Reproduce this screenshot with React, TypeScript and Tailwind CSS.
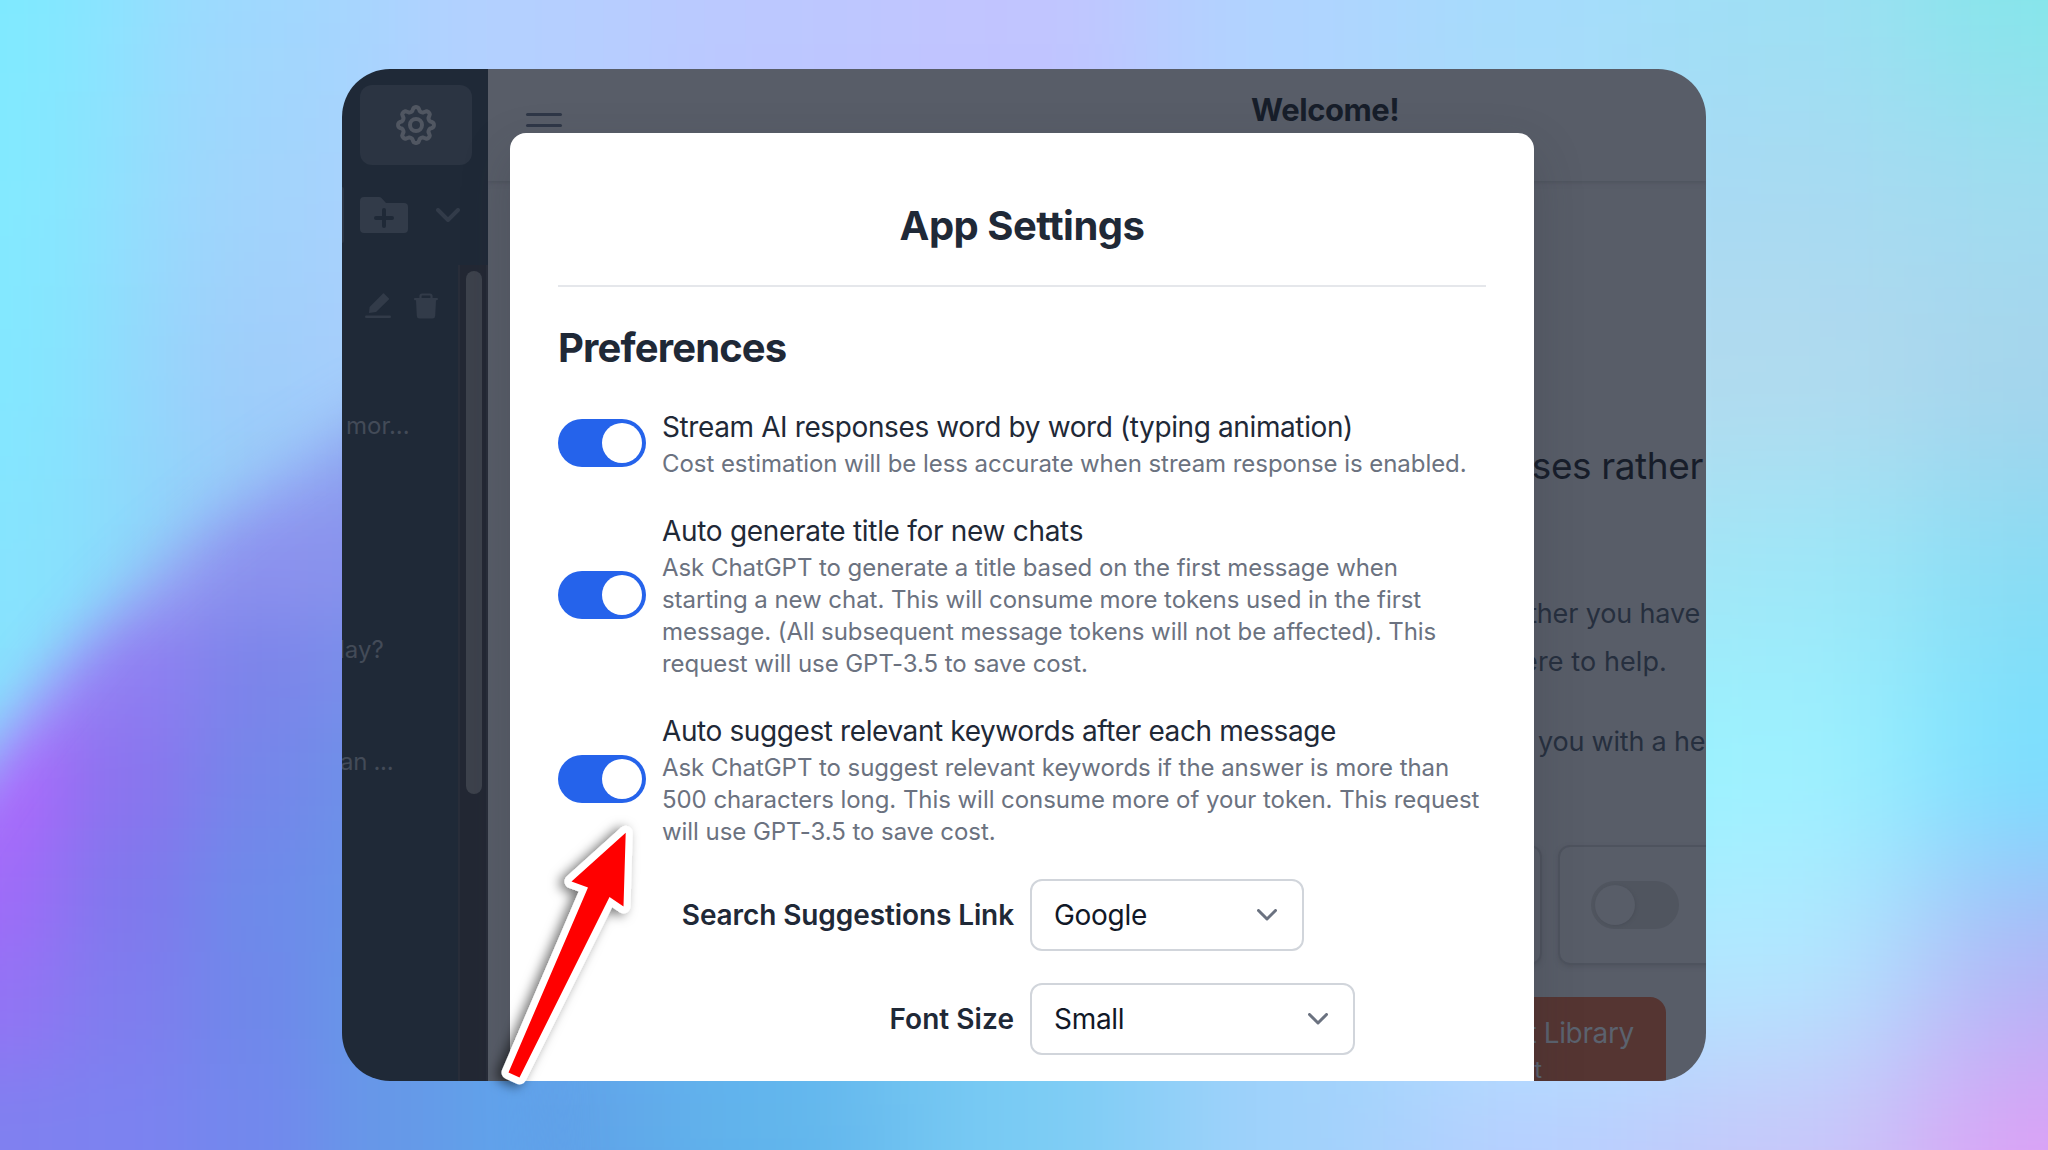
import type { ReactNode } from "react";

type MeshProps = { id: string; rows: string[][]; x: number; y: number; w: number; h: number; blur: number };

/** A smooth colour field: coarse cells centred on their nodes, softened by a blur. */
function Mesh({ id, rows, x, y, w, h, blur }: MeshProps) {
  const lastRow = rows.length - 1;
  return (
    <>
      <filter id={id} x="-1000" y="-1000" width="4200" height="3400" filterUnits="userSpaceOnUse" colorInterpolationFilters="sRGB">
        <feGaussianBlur stdDeviation={blur} />
      </filter>
      <g filter={`url(#${id})`} shapeRendering="crispEdges">
        {rows.map((row, r) =>
          row.map((fill, c) => {
            const left = c === 0 ? -400 : x + (c - 0.5) * w;
            const right = c === row.length - 1 ? x + (c + 0.5) * w + 400 : x + (c + 0.5) * w;
            const top = r === 0 ? -400 : y + (r - 0.5) * h;
            const bottom = r === lastRow ? y + (r + 0.5) * h + 400 : y + (r + 0.5) * h;
            return <rect key={`${r}-${c}`} x={left} y={top} width={right - left} height={bottom - top} fill={fill} />;
          }),
        )}
      </g>
    </>
  );
}

const SKY = [
  ["#7eeaff", "#a0d8fe", "#b4d0ff", "#bcc8ff", "#c2c4ff", "#b0d4ff", "#a6dcfc", "#9ee0f4", "#84e6ea"],
  ["#82eaff", "#a2d4fc", "#b4d0ff", "#bcc6ff", "#c0c2ff", "#b0d4ff", "#a8dcf8", "#a8daf2", "#a0dcf0"],
  ["#82e8ff", "#a0ccfa", "#b4d0ff", "#bcc6ff", "#c0c2ff", "#b0d4ff", "#b4dcf0", "#b2daee", "#a6d4ec"],
  ["#86e4fe", "#92ccf8", "#92ccf8", "#92ccf8", "#92ccf8", "#92ccf8", "#a8e0f4", "#9ee8f8", "#88dcf4"],
  ["#8ae0fc", "#92ccf8", "#62a4ea", "#64b8ee", "#7accf4", "#a0d2fb", "#90f6ff", "#9ef2ff", "#78e0ff"],
  ["#7c84f0", "#6e8cea", "#62a4ea", "#64b8ee", "#7accf4", "#a0d2fb", "#b0e8ff", "#b2e8ff", "#b0b6f6"],
  ["#7c84f0", "#6e8cea", "#609ee8", "#60b4ec", "#7accf4", "#a0d2fb", "#b8ceff", "#c8c6f9", "#dea0f6"],
];

const DUSK = [
  ["#a0a8fb", "#98a8f6", "#94a8f4", "#8ca0ee", "#8c9cee"],
  ["#a890fb", "#98a0f3", "#8c92ee", "#8892ec", "#8094ec"],
  ["#a87cfb", "#907ef2", "#7c84ea", "#7890ea", "#7098e8"],
  ["#ac68fc", "#8a74ee", "#7586ea", "#6c92e8", "#6698e8"],
  ["#9e6cf8", "#8078ed", "#6e8aea", "#6894e8", "#629ee8"],
  ["#9274f4", "#7f7dee", "#6f88ea", "#6698e8", "#60a2ea"],
  ["#8080f0", "#7c82f0", "#7288ed", "#6698e8", "#60a2ea"],
];

function Backdrop() {
  return (
    <svg className="absolute inset-0" width="2048" height="1150" viewBox="0 0 2048 1150">
      <Mesh id="sky" rows={SKY} x={0} y={0} w={256} h={192} blur={75} />
      <filter id="edge" x="-400" y="0" width="1600" height="1800" filterUnits="userSpaceOnUse">
        <feGaussianBlur stdDeviation="30" />
      </filter>
      <mask id="dusk-mask" maskUnits="userSpaceOnUse" x="0" y="0" width="2048" height="1150">
        <path d="M-200 1100 L-70 860 Q10 720 110 615 Q230 490 400 400 L500 500 L560 1400 L-200 1400Z" fill="#fff" filter="url(#edge)" />
      </mask>
      <g mask="url(#dusk-mask)">
        <Mesh id="dusk" rows={DUSK} x={0} y={448} w={128} h={112} blur={38} />
      </g>
    </svg>
  );
}

function GearIcon() {
  const points = Array.from({ length: 96 }, (_, i) => {
    const a = (i / 96) * Math.PI * 2 - Math.PI / 2;
    const r = 15.9 + 2.1 * Math.tanh(1.8 * Math.cos(8 * a));
    return `${(20 + r * Math.cos(a)).toFixed(2)} ${(20 + r * Math.sin(a)).toFixed(2)}`;
  });
  return (
    <svg width="40" height="40" viewBox="0 0 40 40" fill="none" stroke="#505661" strokeWidth="4" strokeLinejoin="round">
      <path d={`M${points.join("L")}Z`} />
      <circle cx="20" cy="20" r="6" />
    </svg>
  );
}

function FolderPlusIcon() {
  return (
    <svg width="48" height="36" viewBox="0 0 48 36">
      <path d="M4 0H19Q20.5 0 21.5 1L26 6H44Q48 6 48 10V32Q48 36 44 36H4Q0 36 0 32V4Q0 0 4 0Z" fill="#323b49" />
      <path d="M24 13V29M16 21H32" stroke="#1f2937" strokeWidth="4" strokeLinecap="round" />
    </svg>
  );
}

function EditIcon() {
  return (
    <svg width="26" height="26" viewBox="0 0 26 26" fill="#323b49">
      <path d="M19 0.5 24 5.5Q24.3 6 23.8 6.5L11 19 4 20 4.6 14 18 0.6Q18.500 0 19 .5Z" />
      <rect x="0" y="22.500" width="26" height="2.5" rx="1.2" />
    </svg>
  );
}

function TrashIcon() {
  return (
    <svg width="24" height="26" viewBox="0 0 24 26">
      <path d="M6.500 5.500V3Q6.500 1.500 8 1.500H16Q17.500 1.500 17.500 3V5.500" fill="none" stroke="#323b49" strokeWidth="2.200" />
      <path d="M1 5H23Q24 5 24 6T23 7.200H22L21.200 23Q21 25.500 18.500 25.500H5.500Q3 25.500 2.800 23L2 7.200H1Q0 7.200 0 6T1 5Z" fill="#323b49" />
    </svg>
  );
}

function Sidebar() {
  return (
    <aside className="relative flex w-[146px] shrink-0 flex-col bg-[#1f2937] pt-4">
      <span className="absolute top-[118px] left-0 h-[56px] w-[2px] rounded-r bg-[#2b3442]" />
      <div className="ml-[18px] flex h-20 w-28 items-center justify-center rounded-xl bg-[#2b3442]">
        <GearIcon />
      </div>
      <div className="flex h-[100px] items-center gap-7 pl-[18px]">
        <FolderPlusIcon />
        <svg width="24" height="14" viewBox="0 0 24 14" fill="none" stroke="#323b49" strokeWidth="4" strokeLinecap="round" strokeLinejoin="round">
          <path d="M2 2 12 12 22 2" />
        </svg>
      </div>
      <div className="flex flex-1">
        <div className="w-[116px] overflow-hidden text-[24px] whitespace-nowrap text-[#434b58]">
          <div className="flex h-[105px] items-center gap-[23px] pb-[24px] pl-[23px]">
            <EditIcon />
            <TrashIcon />
          </div>
          <div className="pl-[4px] leading-[112px]">mor...</div>
          <div className="h-28" />
          <div className="-ml-[3px] leading-[112px]">lay?</div>
          <div className="-ml-[2px] leading-[112px] tracking-[-0.3px]">an ...</div>
        </div>
        <div className="w-[30px] border-x-2 border-x-[#282d39] bg-[#232834] pt-[6px] pl-[6px]">
          <div className="h-[523px] w-4 rounded-full bg-[#3d424c]" />
        </div>
      </div>
    </aside>
  );
}

function Backpage() {
  return (
    <main className="flex min-w-0 flex-1 flex-col bg-[#585d68] whitespace-nowrap">
      <header className="flex h-28 shrink-0 items-start pl-[38px] shadow-[0_2px_4px_#4f545f]">
        <div className="mt-[44px] flex w-9 flex-col gap-[8px]">
          <span className="h-[3px] rounded-full bg-[#2f3747]" />
          <span className="h-[3px] rounded-full bg-[#2f3747]" />
        </div>
        <h2 className="mt-[20px] ml-[689px] text-[31px] leading-[41px] font-bold tracking-[-0.45px] text-[#171e2a]">Welcome!</h2>
      </header>
      <h3 className="mt-[257px] pr-[3px] text-right text-[37px] leading-[56px] tracking-[-0.4px] text-[#171d2a]">ses rather</h3>
      <p className="mt-[96px] pr-[6px] text-right text-[27px] leading-[48px] tracking-[-0.15px] text-[#262f3e]">ther you have</p>
      <p className="pr-[39px] text-right text-[27px] leading-[48px] tracking-[0.1px] text-[#262f3e]">ere to help.</p>
      <p className="mt-8 pl-[1050px] text-[27px] leading-[48px] tracking-[-0.2px] text-[#262f3e]">you with a he</p>
      <div className="mt-[79px] flex h-[120px] shrink-0 gap-4 pl-[854px]">
        <div className="w-[200px] shrink-0 rounded-xl border-2 border-[#4e535e] shadow-[0_2px_4px_#50555f]" />
        <div className="flex w-[200px] shrink-0 items-center rounded-xl border-2 border-[#4e535e] pl-[31px] shadow-[0_2px_4px_#50555f]">
          <div className="flex h-12 w-[88px] items-center rounded-full bg-[#50555f] pl-1">
            <span className="size-10 rounded-full bg-[#585d68] shadow-[1px_1px_3px_#4a4f59]" />
          </div>
        </div>
      </div>
      <div className="mt-8 mr-10 flex-1 self-end rounded-tr-2xl bg-[#553532] pt-[16px] pl-[160px] text-[#5b626e]">
        <div className="pr-8 text-right text-[28px] leading-[41px] tracking-[-0.35px]">t Library</div>
        <div className="pr-[124px] text-right text-[24px] leading-[32px]">t</div>
      </div>
    </main>
  );
}

function SettingRow({ title, tracking, children }: { title: string; tracking: string; children: ReactNode }) {
  return (
    <div className="flex items-center gap-4">
      <div className="flex h-12 w-[88px] shrink-0 items-center justify-end rounded-full bg-[#2563eb] pr-1">
        <span className="size-10 rounded-full bg-white" />
      </div>
      <div className="whitespace-nowrap">
        <div className={`text-[28px] leading-10 text-[#1f2937] ${tracking}`}>{title}</div>
        <p className="-mb-px pt-px text-[24px] leading-8 tracking-[-0.055px] text-[#6b7280]">{children}</p>
      </div>
    </div>
  );
}

function SelectRow({ label, value, width, tracking }: { label: string; value: string; width: string; tracking: string }) {
  return (
    <div className="flex items-center gap-4">
      <div className={`w-[456px] text-right text-[28px] leading-10 font-semibold text-[#1f2937] ${tracking}`}>{label}</div>
      <div className={`flex h-[72px] items-center justify-between rounded-xl border-2 border-[#d1d5db] pr-[25px] pl-[22px] ${width}`}>
        <span className="text-[28px] leading-10 tracking-[-0.3px] text-[#111827]">{value}</span>
        <svg width="20" height="12" viewBox="0 0 20 12" fill="none" stroke="#6b7280" strokeWidth="3" strokeLinecap="round" strokeLinejoin="round">
          <path d="M1.500 1.500 10 10 18.500 1.500" />
        </svg>
      </div>
    </div>
  );
}

function SettingsModal() {
  return (
    <section className="absolute top-16 left-[168px] flex h-[1100px] w-[1024px] flex-col gap-8 rounded-t-2xl bg-white p-12 shadow-[0_20px_50px_rgba(40,44,54,0.22)]">
      <div className="h-[106px] border-b-2 border-[#e5e7eb] text-center text-[40px] leading-[89px] font-bold tracking-[-0.52px] text-[#1f2937]">
        App Settings
      </div>
      <h1 className="-mb-px pt-px text-[40px] leading-[56px] font-bold tracking-[-0.85px] text-[#1f2937]">Preferences</h1>
      <SettingRow title="Stream AI responses word by word (typing animation)" tracking="tracking-[-0.39px]">
        Cost estimation will be less accurate when stream response is enabled.
      </SettingRow>
      <SettingRow title="Auto generate title for new chats" tracking="tracking-[-0.3px]">
        Ask ChatGPT to generate a title based on the first message when
        <br />
        starting a new chat. This will consume more tokens used in the first
        <br />
        message. (All subsequent message tokens will not be affected). This
        <br />
        request will use GPT-3.5 to save cost.
      </SettingRow>
      <SettingRow title="Auto suggest relevant keywords after each message" tracking="tracking-[-0.4px]">
        Ask ChatGPT to suggest relevant keywords if the answer is more than
        <br />
        500 characters long. This will consume more of your token. This request
        <br />
        will use GPT-3.5 to save cost.
      </SettingRow>
      <SelectRow label="Search Suggestions Link" value="Google" width="w-[274px]" tracking="tracking-[-0.1px]" />
      <SelectRow label="Font Size" value="Small" width="w-[325px]" tracking="tracking-[0.05px]" />
    </section>
  );
}

const ARROW = "M625.700 832.700 L623.500 906.500 L609.500 897 L519.500 1077.500 L508.500 1072.500 L588 887.500 L571.500 881.500Z";

function Arrow() {
  return (
    <svg className="pointer-events-none absolute inset-0" width="2048" height="1150" viewBox="0 0 2048 1150">
      <filter id="arrow-shadow" x="440" y="780" width="260" height="360" filterUnits="userSpaceOnUse">
        <feDropShadow dx="-5" dy="2" stdDeviation="6" floodColor="#000" floodOpacity="0.55" />
      </filter>
      <path d={ARROW} fill="#fff" stroke="#fff" strokeWidth="14" strokeLinejoin="round" filter="url(#arrow-shadow)" />
      <path d={ARROW} fill="#ff0000" />
    </svg>
  );
}

export default function App() {
  return (
    <div className="relative h-[1150px] w-[2048px] overflow-hidden pt-[69px] font-['Inter','Liberation_Sans',sans-serif]">
      <Backdrop />
      <div className="relative mx-auto flex h-[1012px] w-[1364px] overflow-hidden rounded-[48px]">
        <Sidebar />
        <Backpage />
        <SettingsModal />
      </div>
      <Arrow />
    </div>
  );
}
